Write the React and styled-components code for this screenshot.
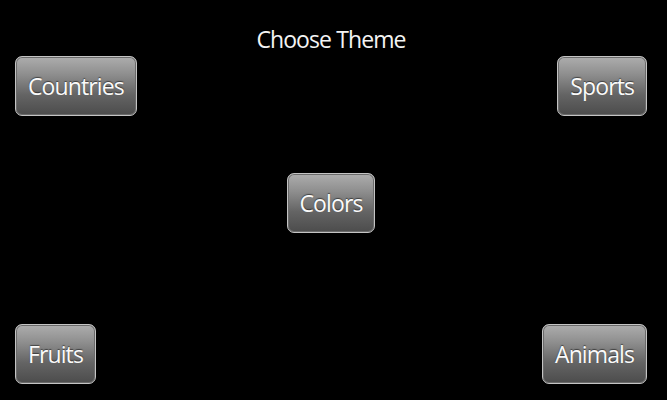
import React from "react"
import styled, { createGlobalStyle } from "styled-components"

const Global = createGlobalStyle`
    html, body {
        margin: 0;
        padding: 0;
        background: #000;
    }
    body {
        font-family: "Open Sans", "Noto Sans", "DejaVu Sans", sans-serif;
    }
`

const Screen = styled.div`
    box-sizing: border-box;
    width: 667px;
    height: 400px;
    background: #000;
    padding: 22px 20px 16px 15px;
    display: grid;
    grid-template-columns: 1fr auto 1fr;
    grid-template-rows: 1fr auto 1fr;
`

const Top = styled.div`
    grid-column: 1 / -1;
    grid-row: 1;
    display: flex;
    flex-direction: column;
`

const Title = styled.div`
    color: #f4f4f4;
    font-size: 23px;
    line-height: 33px;
    padding-top: 1px;
    text-align: center;
    letter-spacing: -0.9px;
`

const Row = styled.div`
    display: flex;
    justify-content: space-between;
    align-items: flex-start;
`

const Bottom = styled(Row)`
    grid-column: 1 / -1;
    grid-row: 3;
    align-self: end;
`

const Middle = styled.div`
    grid-column: 2;
    grid-row: 2;
`

const Button = styled.button`
    box-sizing: border-box;
    height: 60px;
    padding: 0 12px;
    border: 1.5px solid #c4c4c4;
    border-radius: 7px;
    background: linear-gradient(to bottom, #adadad 0%, #8e8e8e 30%, #646464 65%, #4c4c4c 100%);
    box-shadow: inset 0 0 0 1px #6a6a6a;
    color: #fafafa;
    font-family: inherit;
    font-size: 23px;
    letter-spacing: -0.9px;
    text-shadow: 0 -1px 1px rgba(0, 0, 0, 0.5);
    cursor: pointer;
`

const App = () =>
    <>
        <Global/>
        <Screen>
            <Top>
                <Title>Choose Theme</Title>
                <Row>
                    <Button>Countries</Button>
                    <Button>Sports</Button>
                </Row>
            </Top>
            <Middle>
                <Button>Colors</Button>
            </Middle>
            <Bottom>
                <Button>Fruits</Button>
                <Button>Animals</Button>
            </Bottom>
        </Screen>
    </>

export default App
